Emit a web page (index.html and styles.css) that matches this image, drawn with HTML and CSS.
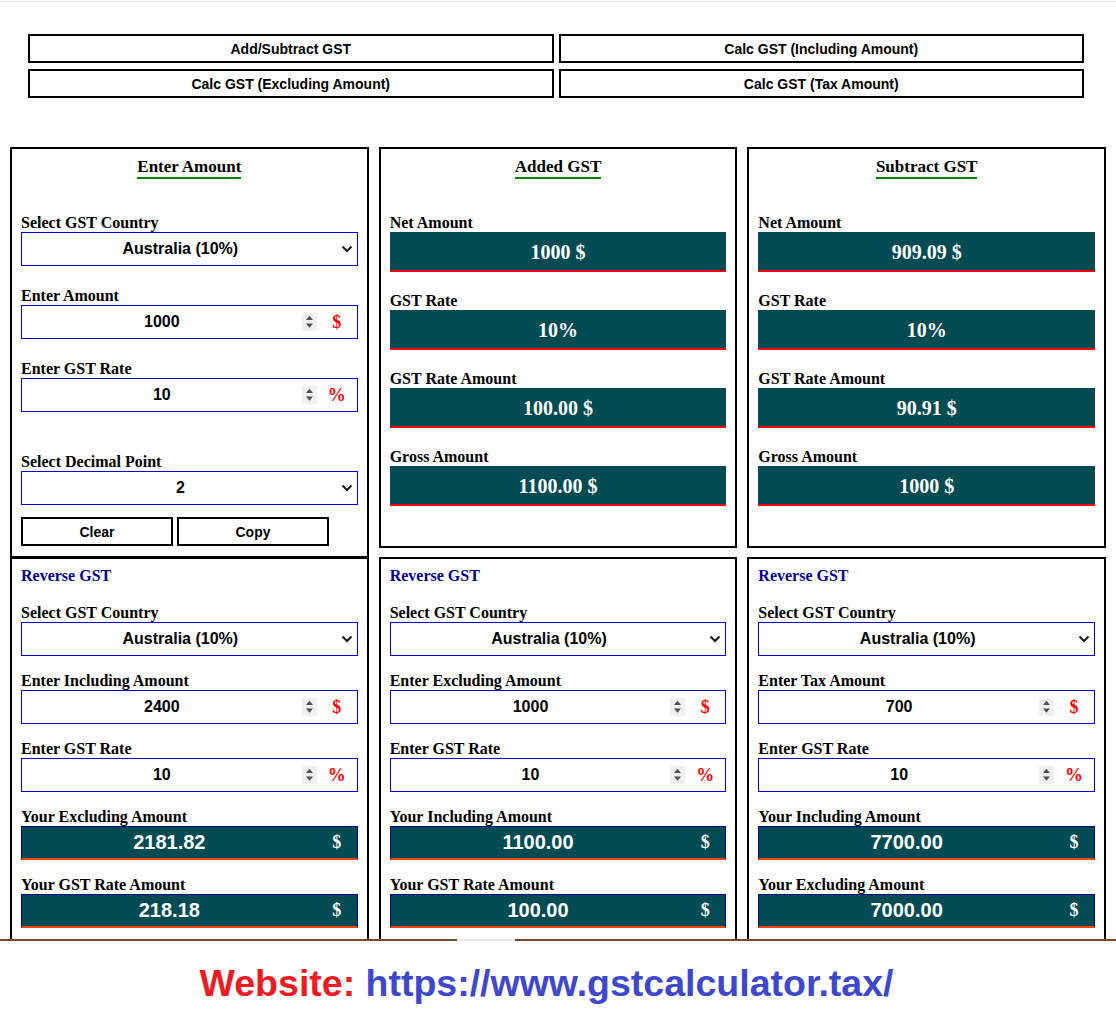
FILE: index.html
```html
<!DOCTYPE html>
<html lang="en">
<head>
<meta charset="utf-8">
<title>GST Calculator</title>
<link rel="stylesheet" href="styles.css">
</head>
<body>
<div class="page">
  <div class="topline"></div>
  <nav class="tabs">
    <button class="tab">Add/Subtract GST</button>
    <button class="tab">Calc GST (Including Amount)</button>
    <button class="tab">Calc GST (Excluding Amount)</button>
    <button class="tab">Calc GST (Tax Amount)</button>
  </nav>

  <main class="grid">
    <!-- LEFT COLUMN -->
    <div class="col col-left">
      <section class="box box-top box-enter">
        <h2 class="box-title"><span>Enter Amount</span></h2>
        <div class="field">
          <label class="lbl">Select GST Country</label>
          <div class="ctrl select"><span class="sel-text">Australia (10%)</span><svg class="chev" width="16" height="8" viewBox="0 0 16 8"><polyline points="3.5,1.5 8,6 12.5,1.5" fill="none" stroke="#1a1a1a" stroke-width="2"/></svg></div>
        </div>
        <div class="field">
          <label class="lbl">Enter Amount</label>
          <div class="ctrl"><span class="num">1000</span><span class="spin"><svg width="15" height="18" viewBox="0 0 15 18"><polygon points="4,7 11,7 7.5,2.8" fill="#505050"/><polygon points="4,10.5 11,10.5 7.5,14.7" fill="#505050"/></svg></span><span class="unit">$</span></div>
        </div>
        <div class="field">
          <label class="lbl">Enter GST Rate</label>
          <div class="ctrl"><span class="num">10</span><span class="spin"><svg width="15" height="18" viewBox="0 0 15 18"><polygon points="4,7 11,7 7.5,2.8" fill="#505050"/><polygon points="4,10.5 11,10.5 7.5,14.7" fill="#505050"/></svg></span><span class="unit">%</span></div>
        </div>
        <div class="field field-far">
          <label class="lbl">Select Decimal Point</label>
          <div class="ctrl select"><span class="sel-text">2</span><svg class="chev" width="16" height="8" viewBox="0 0 16 8"><polyline points="3.5,1.5 8,6 12.5,1.5" fill="none" stroke="#1a1a1a" stroke-width="2"/></svg></div>
        </div>
        <div class="actions">
          <button class="act">Clear</button>
          <button class="act">Copy</button>
        </div>
      </section>

      <section class="box box-rev box-rev-left">
        <h3 class="rev-title">Reverse GST</h3>
        <div class="field">
          <label class="lbl">Select GST Country</label>
          <div class="ctrl select"><span class="sel-text">Australia (10%)</span><svg class="chev" width="16" height="8" viewBox="0 0 16 8"><polyline points="3.5,1.5 8,6 12.5,1.5" fill="none" stroke="#1a1a1a" stroke-width="2"/></svg></div>
        </div>
        <div class="field">
          <label class="lbl">Enter Including Amount</label>
          <div class="ctrl"><span class="num">2400</span><span class="spin"><svg width="15" height="18" viewBox="0 0 15 18"><polygon points="4,7 11,7 7.5,2.8" fill="#505050"/><polygon points="4,10.5 11,10.5 7.5,14.7" fill="#505050"/></svg></span><span class="unit">$</span></div>
        </div>
        <div class="field">
          <label class="lbl">Enter GST Rate</label>
          <div class="ctrl"><span class="num">10</span><span class="spin"><svg width="15" height="18" viewBox="0 0 15 18"><polygon points="4,7 11,7 7.5,2.8" fill="#505050"/><polygon points="4,10.5 11,10.5 7.5,14.7" fill="#505050"/></svg></span><span class="unit">%</span></div>
        </div>
        <div class="field">
          <label class="lbl">Your Excluding Amount</label>
          <div class="res"><span class="num">2181.82</span><span class="unit">$</span></div>
        </div>
        <div class="field">
          <label class="lbl">Your GST Rate Amount</label>
          <div class="res"><span class="num">218.18</span><span class="unit">$</span></div>
        </div>
      </section>
    </div>

    <!-- MIDDLE COLUMN -->
    <div class="col">
      <section class="box box-top box-out">
        <h2 class="box-title"><span>Added GST</span></h2>
        <div class="field">
          <label class="lbl">Net Amount</label>
          <div class="out">1000 $</div>
        </div>
        <div class="field">
          <label class="lbl">GST Rate</label>
          <div class="out">10%</div>
        </div>
        <div class="field">
          <label class="lbl">GST Rate Amount</label>
          <div class="out">100.00 $</div>
        </div>
        <div class="field">
          <label class="lbl">Gross Amount</label>
          <div class="out">1100.00 $</div>
        </div>
      </section>

      <section class="box box-rev">
        <h3 class="rev-title">Reverse GST</h3>
        <div class="field">
          <label class="lbl">Select GST Country</label>
          <div class="ctrl select"><span class="sel-text">Australia (10%)</span><svg class="chev" width="16" height="8" viewBox="0 0 16 8"><polyline points="3.5,1.5 8,6 12.5,1.5" fill="none" stroke="#1a1a1a" stroke-width="2"/></svg></div>
        </div>
        <div class="field">
          <label class="lbl">Enter Excluding Amount</label>
          <div class="ctrl"><span class="num">1000</span><span class="spin"><svg width="15" height="18" viewBox="0 0 15 18"><polygon points="4,7 11,7 7.5,2.8" fill="#505050"/><polygon points="4,10.5 11,10.5 7.5,14.7" fill="#505050"/></svg></span><span class="unit">$</span></div>
        </div>
        <div class="field">
          <label class="lbl">Enter GST Rate</label>
          <div class="ctrl"><span class="num">10</span><span class="spin"><svg width="15" height="18" viewBox="0 0 15 18"><polygon points="4,7 11,7 7.5,2.8" fill="#505050"/><polygon points="4,10.5 11,10.5 7.5,14.7" fill="#505050"/></svg></span><span class="unit">%</span></div>
        </div>
        <div class="field">
          <label class="lbl">Your Including Amount</label>
          <div class="res"><span class="num">1100.00</span><span class="unit">$</span></div>
        </div>
        <div class="field">
          <label class="lbl">Your GST Rate Amount</label>
          <div class="res"><span class="num">100.00</span><span class="unit">$</span></div>
        </div>
      </section>
    </div>

    <!-- RIGHT COLUMN -->
    <div class="col">
      <section class="box box-top box-out">
        <h2 class="box-title"><span>Subtract GST</span></h2>
        <div class="field">
          <label class="lbl">Net Amount</label>
          <div class="out">909.09 $</div>
        </div>
        <div class="field">
          <label class="lbl">GST Rate</label>
          <div class="out">10%</div>
        </div>
        <div class="field">
          <label class="lbl">GST Rate Amount</label>
          <div class="out">90.91 $</div>
        </div>
        <div class="field">
          <label class="lbl">Gross Amount</label>
          <div class="out">1000 $</div>
        </div>
      </section>

      <section class="box box-rev">
        <h3 class="rev-title">Reverse GST</h3>
        <div class="field">
          <label class="lbl">Select GST Country</label>
          <div class="ctrl select"><span class="sel-text">Australia (10%)</span><svg class="chev" width="16" height="8" viewBox="0 0 16 8"><polyline points="3.5,1.5 8,6 12.5,1.5" fill="none" stroke="#1a1a1a" stroke-width="2"/></svg></div>
        </div>
        <div class="field">
          <label class="lbl">Enter Tax Amount</label>
          <div class="ctrl"><span class="num">700</span><span class="spin"><svg width="15" height="18" viewBox="0 0 15 18"><polygon points="4,7 11,7 7.5,2.8" fill="#505050"/><polygon points="4,10.5 11,10.5 7.5,14.7" fill="#505050"/></svg></span><span class="unit">$</span></div>
        </div>
        <div class="field">
          <label class="lbl">Enter GST Rate</label>
          <div class="ctrl"><span class="num">10</span><span class="spin"><svg width="15" height="18" viewBox="0 0 15 18"><polygon points="4,7 11,7 7.5,2.8" fill="#505050"/><polygon points="4,10.5 11,10.5 7.5,14.7" fill="#505050"/></svg></span><span class="unit">%</span></div>
        </div>
        <div class="field">
          <label class="lbl">Your Including Amount</label>
          <div class="res"><span class="num">7700.00</span><span class="unit">$</span></div>
        </div>
        <div class="field">
          <label class="lbl">Your Excluding Amount</label>
          <div class="res"><span class="num">7000.00</span><span class="unit">$</span></div>
        </div>
      </section>
    </div>
  </main>
</div>

<footer class="footer">
  <span class="w-red">Website:</span> <span class="w-blue">https://www.gstcalculator.tax/</span>
</footer>
</body>
</html>
```

FILE: styles.css
```css
* { box-sizing: border-box; }

body {
  margin: 0;
  background: #fff;
  color: #000;
  font-family: "Liberation Serif", "Times New Roman", serif;
}

.page {
  height: 939px;
  overflow: hidden;
}

.topline {
  margin-top: 1px;
  height: 1px;
  background: #e2e2e2;
}

/* top navigation buttons */
.tabs {
  display: grid;
  grid-template-columns: 1fr 1fr;
  column-gap: 5px;
  row-gap: 6px;
  margin: 32px 32px 0 28px;
}

.tab {
  height: 29px;
  padding: 0;
  border: 2px solid #000;
  background: #fff;
  color: #000;
  font: bold 14px "Liberation Sans", Arial, sans-serif;
}

/* three column grid */
.grid {
  display: grid;
  grid-template-columns: repeat(3, 1fr);
  column-gap: 10px;
  margin: 49px 10px 0;
  align-items: start;
}

.col {
  display: flex;
  flex-direction: column;
  gap: 9px;
}

.col-left { gap: 0; }

.box {
  border: 2px solid #000;
  padding: 8px 9px 10px;
}

.box-out { padding-bottom: 40px; }

.box-title {
  margin: 0;
  text-align: center;
  font-size: 17px;
  line-height: 20px;
  font-weight: bold;
}

.box-title span {
  display: inline-block;
  border-bottom: 2px solid #008000;
}

.lbl {
  display: block;
  font-size: 16px;
  line-height: 18px;
  font-weight: bold;
}

.field { margin-top: 20px; }

.box-top .field:first-of-type { margin-top: 35px; }
.box-enter .field + .field { margin-top: 21px; }
.box-enter .field + .field.field-far { margin-top: 41px; }

/* reverse boxes */
.box-rev { padding-top: 8px; padding-bottom: 60px; }
.box-rev-left { border-top-width: 1px; }

.rev-title {
  margin: 0;
  font-size: 16px;
  line-height: 18px;
  font-weight: bold;
  color: #00008b;
}

.box-rev .field { margin-top: 16px; }
.box-rev .field:first-of-type { margin-top: 19px; }

/* input-like controls */
.ctrl {
  height: 34px;
  border: 1px solid #0000d6;
  display: flex;
  align-items: center;
  font: bold 16px "Liberation Sans", Arial, sans-serif;
  background: #fff;
}

.sel-text {
  flex: 1;
  text-align: center;
}

.chev {
  display: block;
  margin-right: 2px;
}

.num {
  flex: 1;
  text-align: center;
}

.spin {
  width: 15px;
  height: 18px;
  background: #efefef;
}

.spin svg { display: block; }

.unit {
  width: 40px;
  text-align: center;
  font: bold 18px "Liberation Serif", "Times New Roman", serif;
  color: #ff0000;
}

/* result bars in the top boxes */
.out {
  height: 40px;
  background: #024b52;
  border-bottom: 2px solid #ff0000;
  color: #fff;
  text-align: center;
  font: bold 20px/40px "Liberation Serif", "Times New Roman", serif;
}

/* result bars in the reverse boxes */
.res {
  height: 34px;
  display: flex;
  align-items: center;
  background: #024b52;
  border: 1px solid #000080;
  border-bottom: 2px solid #ff4500;
  color: #fff;
}

.res .num {
  font: bold 20px "Liberation Sans", Arial, sans-serif;
}

.res .unit { color: #fff; }

/* clear / copy */
.actions {
  display: flex;
  gap: 4px;
  margin-top: 12px;
}

.act {
  width: 152px;
  height: 29px;
  padding: 0;
  border: 2px solid #000;
  background: #fff;
  color: #000;
  font: bold 14px "Liberation Sans", Arial, sans-serif;
}

/* footer banner */
.footer {
  position: relative;
  height: 85px;
  border-top: 2px solid #6f4b2b;
  padding: 21px 23px 0 0;
  text-align: center;
  font: bold 37.5px/42px "Liberation Sans", Arial, sans-serif;
}

.footer::before {
  content: "";
  position: absolute;
  left: 457px;
  top: -2px;
  width: 58px;
  height: 2px;
  background: #ececec;
}

.w-red { color: #ed1c24; }
.w-blue { color: #3f48cc; }
```
